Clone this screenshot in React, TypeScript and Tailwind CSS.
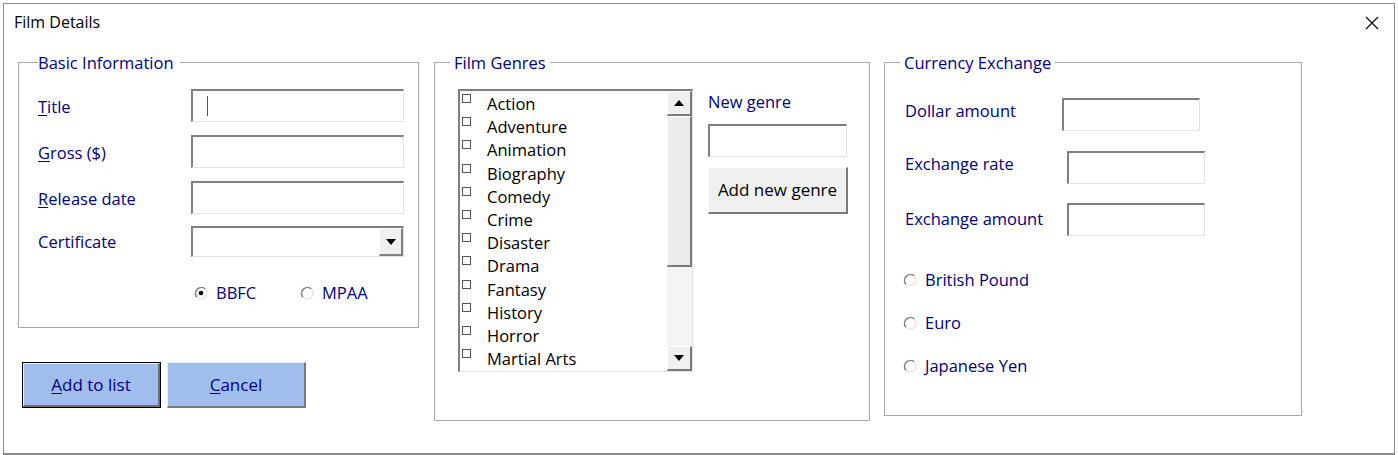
import React from 'react';

const font = { fontFamily: '"Open Sans", "Noto Sans", sans-serif' };

function Radio({ checked = false }: { checked?: boolean }) {
  return (
    <svg width="14" height="14" viewBox="0 0 14 14" className="shrink-0">
      <circle cx="7" cy="7" r="6" fill="#fff" stroke="#e3e3e3" strokeWidth="1.2" />
      <path d="M2.8 11.2 A6 6 0 0 1 11.2 2.8" fill="none" stroke="#7d7d7d" strokeWidth="1.4" />
      {checked && <circle cx="7" cy="7" r="2.3" fill="#000" />}
    </svg>
  );
}

function Label({ text, u }: { text: string; u?: boolean }) {
  if (!u) return <span>{text}</span>;
  return (
    <span>
      <span className="underline underline-offset-2">{text[0]}</span>
      {text.slice(1)}
    </span>
  );
}

const sunken =
  'bg-white border-t-2 border-l-2 border-r border-b border-t-[#808080] border-l-[#808080] border-r-[#e3e3e3] border-b-[#e3e3e3]';

function TextBox({ w, h = 33, caret = false }: { w: number; h?: number; caret?: boolean }) {
  return (
    <div className={`${sunken} flex items-center`} style={{ width: w, height: h }}>
      {caret && <div className="ml-[14px] w-px h-[20px] bg-[#555]" />}
    </div>
  );
}

function Arrow({ up = false }: { up?: boolean }) {
  return (
    <svg width="10" height="6" viewBox="0 0 10 6">
      <path d={up ? 'M0 6 L5 0 L10 6 Z' : 'M0 0 L5 6 L10 0 Z'} fill="#000" />
    </svg>
  );
}

const genres = [
  'Action',
  'Adventure',
  'Animation',
  'Biography',
  'Comedy',
  'Crime',
  'Disaster',
  'Drama',
  'Fantasy',
  'History',
  'Horror',
  'Martial Arts',
];

export default function App() {
  return (
    <div className="w-[1398px] h-[455px] bg-white pt-[3px] pl-[3px]" style={font}>
      <div className="w-[1392px] h-[452px] border border-[#8a8a8a] border-b-2 bg-white flex flex-col">
        {/* title bar */}
        <div className="h-[48px] flex items-start justify-between pl-[10px] pr-[15px] pt-[8px]">
          <span className="text-[16px] leading-[20px] text-black">Film Details</span>
          <svg width="14" height="14" viewBox="0 0 14 14" className="mt-[4px]">
            <path d="M1 1 L13 13 M13 1 L1 13" stroke="#111" strokeWidth="1.3" />
          </svg>
        </div>

        <div className="flex items-start pl-[14px] text-[#000080] text-[16.5px]">
          {/* left column */}
          <div className="flex flex-col w-[401px]">
            <fieldset className="border border-[#a8a8a8] h-[276px] w-[401px] pl-[19px]">
              <legend className="ml-[0px] leading-[22px] h-[20px] pr-[6px]">Basic Information</legend>
              <div className="flex flex-col pt-[17px] gap-[13px]">
                <div className="flex items-center h-[33px]">
                  <div className="w-[153px] pt-[3px]"><Label text="Title" u /></div>
                  <TextBox w={213} caret />
                </div>
                <div className="flex items-center h-[33px]">
                  <div className="w-[153px] pt-[3px]"><Label text="Gross ($)" u /></div>
                  <TextBox w={213} />
                </div>
                <div className="flex items-center h-[33px]">
                  <div className="w-[153px] pt-[3px]"><Label text="Release date" u /></div>
                  <TextBox w={213} />
                </div>
                <div className="flex items-center h-[31px] -mt-px">
                  <div className="w-[153px] pt-[2px]">Certificate</div>
                  <div className={`${sunken} w-[213px] h-[31px] flex justify-end items-stretch`}>
                    <div className="w-[24px] bg-[#f0f0f0] border-t border-l border-white border-r-2 border-b-2 border-r-[#808080] border-b-[#808080] flex items-center justify-center">
                      <Arrow />
                    </div>
                  </div>
                </div>
                <div className="flex items-center h-[20px] mt-[13px] pl-[153px]">
                  <div className="flex items-center gap-[8px] w-[109px] pl-[3px]">
                    <Radio checked />
                    <span>BBFC</span>
                  </div>
                  <div className="flex items-center gap-[8px]">
                    <Radio />
                    <span>MPAA</span>
                  </div>
                </div>
              </div>
            </fieldset>

            <div className="flex gap-[6px] mt-[34px] pl-[4px]">
              <button className="w-[139px] h-[46px] border border-black bg-[#a0bdeb] text-[#000080] text-[17px]">
                <div className="w-full h-full border-t border-l border-[#e8eefa] border-r-2 border-b-2 border-r-[#6e6e6e] border-b-[#6e6e6e] flex items-center justify-center">
                  <Label text="Add to list" u />
                </div>
              </button>
              <button className="w-[139px] h-[46px] bg-[#a0bdeb] text-[#000080] text-[17px] border-t border-l border-[#e8eefa] border-r-2 border-b-2 border-r-[#7a7a7a] border-b-[#7a7a7a] flex items-center justify-center">
                <Label text="Cancel" u />
              </button>
            </div>
          </div>

          {/* film genres */}
          <fieldset className="ml-[15px] border border-[#a8a8a8] h-[369px] w-[436px] pl-[23px]">
            <legend className="ml-[-8px] leading-[22px] h-[20px] px-[4px]">Film Genres</legend>
            <div className="flex items-start pt-[17px]">
              <div className={`${sunken} w-[235px] h-[283px] flex`}>
                <div className="flex-1 flex flex-col text-black">
                  {genres.map((g, i) => (
                    <div key={i} className="h-[23.2px] flex items-start shrink-0">
                      <div className="w-[9px] h-[9px] border border-[#555] bg-white ml-[2px] mt-[3px] shrink-0" />
                      <span className="ml-[16px] leading-[23px] pt-[1px] text-[16.5px]">{g}</span>
                    </div>
                  ))}
                </div>
                <div className="w-[25px] flex flex-col bg-[#f4f4f4]">
                  <div className="h-[25px] bg-[#f0f0f0] border-t border-l border-white border-r-2 border-b-2 border-r-[#7a7a7a] border-b-[#7a7a7a] flex items-center justify-center">
                    <Arrow up />
                  </div>
                  <div className="h-[151px] bg-[#ececec] border-t border-l border-white border-r-2 border-b-2 border-r-[#7a7a7a] border-b-[#7a7a7a]" />
                  <div className="flex-1" />
                  <div className="h-[25px] bg-[#f0f0f0] border-t border-l border-white border-r-2 border-b-2 border-r-[#7a7a7a] border-b-[#7a7a7a] flex items-center justify-center">
                    <Arrow />
                  </div>
                </div>
              </div>

              <div className="ml-[15px] flex flex-col mt-[3px]">
                <div className="h-[20px] leading-[20px]">New genre</div>
                <div className="mt-[12px]">
                  <TextBox w={139} h={33} />
                </div>
                <button className="mt-[10px] w-[140px] h-[47px] bg-[#f0f0f0] text-black text-[17px] border-t border-l border-white border-r-2 border-b-2 border-r-[#7a7a7a] border-b-[#7a7a7a]">
                  Add new genre
                </button>
              </div>
            </div>
          </fieldset>

          {/* currency exchange */}
          <fieldset className="ml-[14px] border border-[#a8a8a8] h-[364px] w-[418px] pl-[20px]">
            <legend className="ml-[-5px] leading-[22px] h-[20px] px-[4px]">Currency Exchange</legend>
            <div className="flex flex-col pt-[26px]">
              <div className="flex items-center h-[33px]">
                <div className="w-[157px] mb-[7px]">Dollar amount</div>
                <TextBox w={138} />
              </div>
              <div className="flex items-center h-[33px] mt-[20px]">
                <div className="w-[162px] mb-[7px]">Exchange rate</div>
                <TextBox w={138} />
              </div>
              <div className="flex items-center h-[33px] mt-[19px]">
                <div className="w-[162px]">Exchange amount</div>
                <TextBox w={138} />
              </div>
              <div className="flex flex-col -ml-[2px] mt-[34px] gap-[23px]">
                {['British Pound', 'Euro', 'Japanese Yen'].map((c) => (
                  <div key={c} className="flex items-center h-[20px] gap-[8px]">
                    <Radio />
                    <span>{c}</span>
                  </div>
                ))}
              </div>
            </div>
          </fieldset>
        </div>
      </div>
    </div>
  );
}
